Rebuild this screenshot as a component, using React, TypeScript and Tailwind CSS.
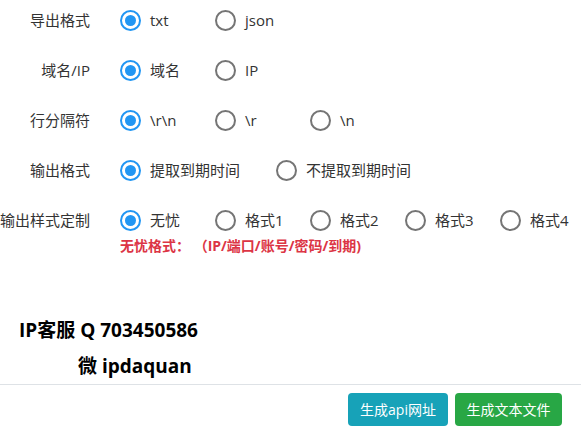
type Opt = { label: string; checked?: boolean; w?: string };

const rows: { title: string; opts: Opt[] }[] = [
  { title: '导出格式', opts: [{ label: 'txt', checked: true }, { label: 'json' }] },
  { title: '域名/IP', opts: [{ label: '域名', checked: true }, { label: 'IP' }] },
  { title: '行分隔符', opts: [{ label: '\\r\\n', checked: true }, { label: '\\r' }, { label: '\\n' }] },
  {
    title: '输出格式',
    opts: [{ label: '提取到期时间', checked: true, w: 'w-[156px]' }, { label: '不提取到期时间', w: 'w-auto' }],
  },
];

const styleOpts: Opt[] = [
  { label: '无忧', checked: true },
  { label: '格式1' },
  { label: '格式2' },
  { label: '格式3' },
  { label: '格式4', w: 'w-auto' },
];

const Radio = ({ label, checked, w }: Opt) => (
  <label className={`flex items-center gap-[9px] shrink-0 ${w ?? 'w-[95px]'}`}>
    {checked ? (
      <span className="flex shrink-0 items-center justify-center w-[21px] h-[21px] rounded-full border-2 border-[#2196f3]">
        <span className="w-[11px] h-[11px] rounded-full bg-[#2196f3]" />
      </span>
    ) : (
      <span className="shrink-0 w-[21px] h-[21px] rounded-full border-2 border-[#757575]" />
    )}
    <span className="whitespace-nowrap">{label}</span>
  </label>
);

export default function App() {
  return (
    <div
      className="w-[581px] h-[435px] overflow-hidden bg-white text-[15px] text-[#333]"
      style={{ fontFamily: '"Open Sans", "Noto Sans CJK SC", sans-serif' }}
    >
      {rows.map((row) => (
        <div className="flex items-center h-[40px] mb-[10px]" key={row.title}>
          <div className="w-[90px] text-right whitespace-nowrap">{row.title}</div>
          <div className="flex items-center ml-[30px]">
            {row.opts.map((o) => (
              <Radio key={o.label} {...o} />
            ))}
          </div>
        </div>
      ))}

      <div className="flex items-start">
        <div className="w-[90px] h-[40px] flex items-center justify-end whitespace-nowrap">输出样式定制</div>
        <div className="ml-[30px]">
          <div className="flex items-center h-[40px]">
            {styleOpts.map((o) => (
              <Radio key={o.label} {...o} />
            ))}
          </div>
          <div className="-mt-[3px] leading-[18px] text-[14px] font-bold text-[#dc3545] whitespace-nowrap">
            无忧格式： （IP/端口/账号/密码/到期)
          </div>
        </div>
      </div>

      <div className="mt-[57px] text-[19px] font-bold text-black leading-[36px]">
        <div className="pl-[19px]">IP客服 Q 703450586</div>
        <div className="pl-[78px]">微 ipdaquan</div>
      </div>

      <div className="border-t border-[#dee2e6] flex justify-end gap-[7px] pr-[19px] pt-[8px]">
        <button className="h-[33px] w-[100px] rounded bg-[#17a2b8] text-white text-[14px]">生成api网址</button>
        <button className="h-[33px] w-[107px] rounded bg-[#28a745] text-white text-[14px]">生成文本文件</button>
      </div>
    </div>
  );
}
